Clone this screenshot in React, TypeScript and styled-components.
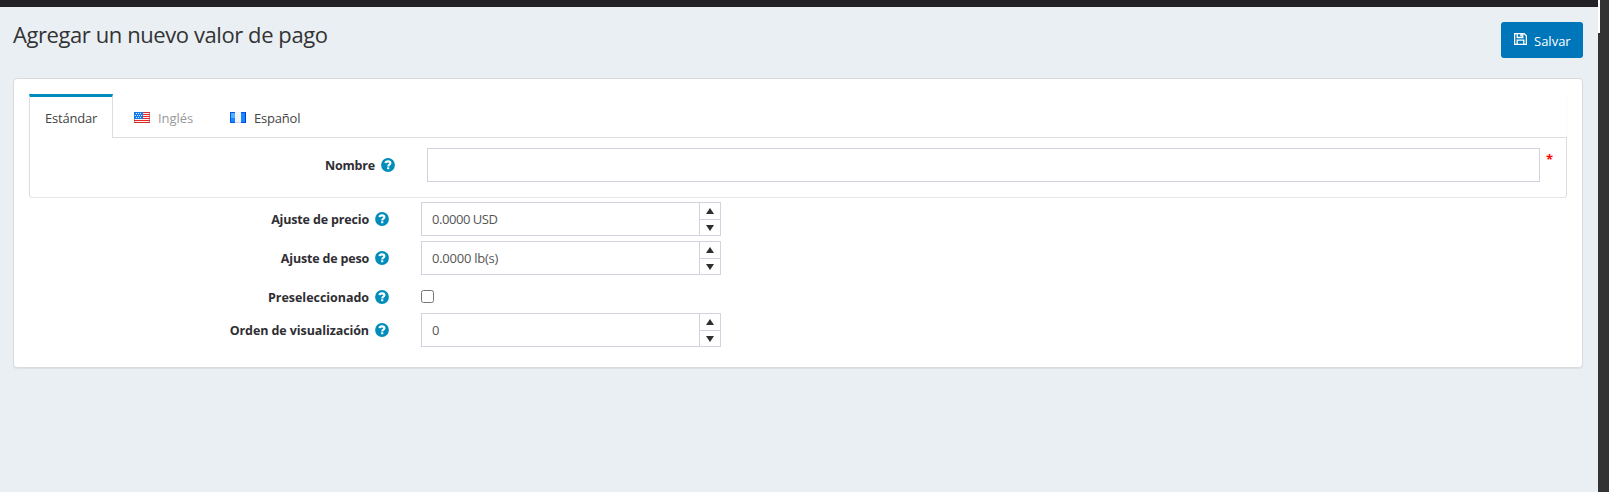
import React from "react";
import styled, { createGlobalStyle } from "styled-components";

const GlobalStyle = createGlobalStyle`
  * { box-sizing: border-box; }
  body { margin: 0; background: #333; overflow: hidden; }
`;

const Shell = styled.div`
  display: flex;
  height: 492px;
  font: 13px/20px "Open Sans", "Noto Sans", sans-serif;
  color: #333;
`;
const Page = styled.main`
  width: 1598px;
  flex: none;
  background: #eaeff4;
  border-top: 7px solid #222226;
`;
const ScrollTrack = styled.aside`
  flex: 1;
  background: #333;
`;
const ScrollThumb = styled.div`
  width: 2px;
  height: 33px;
  background: #fff;
`;
const Header = styled.header`
  display: flex;
  justify-content: space-between;
  align-items: flex-start;
  height: 71px;
  padding: 15px 15px 0 13px;
`;
const Title = styled.h1`
  margin: -3px 0 0;
  font-size: 22px;
  line-height: 30px;
  font-weight: 400;
  letter-spacing: -0.42px;
`;
const SaveButton = styled.button`
  display: flex;
  align-items: center;
  width: 82px;
  height: 36px;
  padding: 2px 0 0 13px;
  gap: 7px;
  border: 0;
  border-radius: 3px;
  background: #0076ba;
  color: #fff;
  font: 500 13px/20px "Open Sans", sans-serif;
  svg { margin-top: -4px; }
`;
const Panel = styled.section`
  margin: 0 15px 0 13px;
  height: 290px;
  padding: 15px;
  background: #fff;
  border: 1px solid #d9dcdf;
  border-radius: 4px;
  box-shadow: 0 1px 1px rgba(0, 0, 0, 0.06);
`;
const Tabs = styled.nav`
  display: flex;
  height: 43px;
  border-right: 1px solid #fafafa;
`;
const Tab = styled.a<{ $active?: boolean; $muted?: boolean; $width: number }>`
  display: flex;
  align-items: center;
  gap: 8px;
  width: ${(p) => p.$width}px;
  height: ${(p) => (p.$active ? 44 : 43)}px;
  padding: ${(p) => (p.$active ? "1px 0 0 15px" : "4px 0 0 21px")};
  border: solid #ddd;
  border-width: ${(p) => (p.$active ? "0 1px" : "0")};
  border-top: ${(p) => (p.$active ? "3px solid #008dbc" : "0")};
  background: #fff;
  position: ${(p) => (p.$active ? "relative" : "static")};
  color: ${(p) => (p.$muted ? "#999" : "#444")};
  letter-spacing: ${(p) => (p.$muted ? "-0.05px" : "-0.2px")};
`;
const TabContent = styled.div`
  height: 61px;
  margin-bottom: 4px;
  padding-top: 10px;
  border: 1px solid #ddd;
  border-bottom-color: #e6e6e6;
  border-radius: 0 0 3px 3px;
`;
const Row = styled.div<{ $label: number; $gap?: number }>`
  display: grid;
  grid-template-columns: ${(p) => p.$label}px auto 1fr;
  column-gap: 32px;
  height: 34px;
  margin-bottom: ${(p) => p.$gap ?? 0}px;
`;
const Label = styled.label<{ $track?: number }>`
  display: flex;
  align-items: center;
  justify-content: flex-end;
  gap: 6px;
  padding-top: 1px;
  font-size: 12.5px;
  font-weight: 700;
  letter-spacing: ${(p) => p.$track ?? -0.2}px;
  color: #2e2e33;
  svg { margin-top: -1px; }
`;
const NameInput = styled.input`
  width: 1113px;
  height: 34px;
  border: 1px solid #d1d3df;
  background: #fff;
  outline: 0;
`;
const Required = styled.span`
  margin-left: -26px;
  padding-top: 1px;
  color: #f00;
  font-size: 13px;
  font-weight: 700;
`;
const Spinner = styled.div`
  display: flex;
  width: 300px;
  height: 34px;
  border: 1px solid #d1d3df;
`;
const Value = styled.div<{ $track?: number }>`
  flex: 1;
  padding: 6px 0 0 10px;
  line-height: 20px;
  color: #555;
  letter-spacing: ${(p) => p.$track ?? 0}px;
`;
const Steps = styled.div`
  width: 21px;
  border-left: 1px solid #d1d3df;
`;
const Step = styled.div`
  display: flex;
  height: 16px;
  align-items: center;
  justify-content: center;
  & + & { border-top: 1px solid #d1d3df; }
`;
const Checkbox = styled.input`
  width: 13px;
  height: 13px;
  margin: 10px 0 0;
`;

const Help = () => (
  <svg width="14" height="14" viewBox="0 0 14 14">
    <circle cx="7" cy="7" r="6.9" fill="#008dbc" />
    <path d="M4.5 5.2C4.7 3.9 5.7 3.4 7 3.4c1.4 0 2.4.7 2.4 1.8C9.4 6.8 7.2 6.6 7.2 8.4" fill="none" stroke="#fff" strokeWidth="2.1" />
    <path d="M6.1 9.3h2.2v1.9H6.1z" fill="#fff" />
  </svg>
);

const Floppy = () => (
  <svg width="13" height="12" viewBox="0 0 13 12" fill="none" stroke="#fff" strokeWidth="1.3">
    <path d="M.6.6h9.5l2.3 2.2v8.6H.6z" />
    <path d="M3.2 11.2V7.1h6.6v4.1M3.2.8v3.7h5.6V.8" />
    <path d="M6.3 1h1.6v2.6H6.3z" fill="#fff" stroke="none" />
  </svg>
);

const UsFlag = () => (
  <svg width="16" height="11" viewBox="0 0 16 11">
    <path fill="#f7f3f3" d="M0 0h16v11H0z" />
    <path stroke="#f32220" strokeWidth="1" d="M0 .5h16M0 2.5h16M0 4.5h16M0 6.5h16M0 8.5h16M0 10.5h16" />
    <path fill="#147be8" d="M0 0h9v7H0z" />
    <path stroke="#d8ebff" strokeDasharray="1 1" d="M2 1.5h6M1 3.5h7M2 5.5h6" />
    <path fill="none" stroke="#a83d3d" strokeOpacity=".55" d="M9 .5h6.5v10H.5V7" />
  </svg>
);

const GtFlag = () => (
  <svg width="16" height="11" viewBox="0 0 16 11">
    <path fill="#1687ff" d="M0 0h16v11H0z" />
    <path fill="#4eb0ff" d="M1 1h4v5H1z" />
    <path fill="none" stroke="#0553e8" d="M.5.5h15v10H.5z" />
    <path fill="#f3f3f3" d="M5 0h6v11H5z" />
    <path fill="#d7dce4" d="M5 10h6v1H5z" />
    <path fill="#0038dc" d="M15 0h1v11h-1z" />
  </svg>
);

const Arrow = ({ down }: { down?: boolean }) => (
  <svg width="8" height="6" viewBox="0 0 8 6">
    <path fill="#2e2e33" d={down ? "M0 0h8L4 6z" : "M0 6h8L4 0z"} />
  </svg>
);

const NumberField = ({ value, track }: { value: string; track?: number }) => (
  <Spinner>
    <Value $track={track}>{value}</Value>
    <Steps>
      <Step><Arrow /></Step>
      <Step><Arrow down /></Step>
    </Steps>
  </Spinner>
);

export default function App() {
  return (
    <Shell>
      <GlobalStyle />
      <Page>
        <Header>
          <Title>Agregar un nuevo valor de pago</Title>
          <SaveButton><Floppy />Salvar</SaveButton>
        </Header>
        <Panel>
          <Tabs>
            <Tab $active $width={84}>Estándar</Tab>
            <Tab $muted $width={96}><UsFlag />Inglés</Tab>
            <Tab $width={100}><GtFlag />Español</Tab>
          </Tabs>
          <TabContent>
            <Row $label={365}>
              <Label>Nombre<Help /></Label>
              <NameInput />
              <Required>*</Required>
            </Row>
          </TabContent>
          <Row $label={360} $gap={5}>
            <Label $track={-0.16}>Ajuste de precio<Help /></Label>
            <NumberField value="0.0000 USD" track={-0.45} />
          </Row>
          <Row $label={360} $gap={5}>
            <Label $track={-0.18}>Ajuste de peso<Help /></Label>
            <NumberField value="0.0000 lb(s)" track={-0.25} />
          </Row>
          <Row $label={360} $gap={-1}>
            <Label $track={-0.04}>Preseleccionado<Help /></Label>
            <Checkbox type="checkbox" />
          </Row>
          <Row $label={360}>
            <Label $track={-0.09}>Orden de visualización<Help /></Label>
            <NumberField value="0" />
          </Row>
        </Panel>
      </Page>
      <ScrollTrack><ScrollThumb /></ScrollTrack>
    </Shell>
  );
}
